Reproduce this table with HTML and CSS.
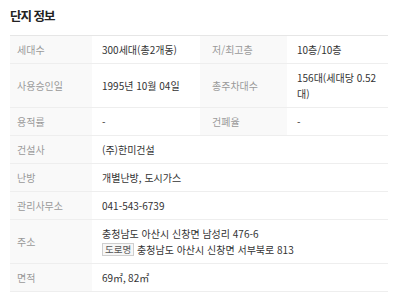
FILE: index.html
```html
<!DOCTYPE html>
<html lang="ko">
<head>
<meta charset="utf-8">
<link rel="stylesheet" href="styles.css">
</head>
<body>
<section class="complex">
  <h2 class="complex-title">단지 정보</h2>
  <table class="info">
    <colgroup>
      <col class="c-label1">
      <col class="c-value1">
      <col class="c-label2">
      <col class="c-value2">
    </colgroup>
    <tr>
      <th class="lbl">세대수</th>
      <td class="val">300세대(총2개동)</td>
      <th class="lbl lbl2">저/최고층</th>
      <td class="val">10층/10층</td>
    </tr>
    <tr>
      <th class="lbl">사용승인일</th>
      <td class="val">1995년 10월 04일</td>
      <th class="lbl lbl2">총주차대수</th>
      <td class="val">156대(세대당 0.52대)</td>
    </tr>
    <tr>
      <th class="lbl">용적률</th>
      <td class="val">-</td>
      <th class="lbl lbl2">건폐율</th>
      <td class="val">-</td>
    </tr>
    <tr>
      <th class="lbl">건설사</th>
      <td class="val" colspan="3">(주)한미건설</td>
    </tr>
    <tr>
      <th class="lbl">난방</th>
      <td class="val" colspan="3">개별난방, 도시가스</td>
    </tr>
    <tr>
      <th class="lbl">관리사무소</th>
      <td class="val" colspan="3">041-543-6739</td>
    </tr>
    <tr>
      <th class="lbl">주소</th>
      <td class="val" colspan="3">
        <div>충청남도 아산시 신창면 남성리 476-6</div>
        <div><span class="badge">도로명</span> 충청남도 아산시 신창면 서부북로 813</div>
      </td>
    </tr>
    <tr>
      <th class="lbl">면적</th>
      <td class="val" colspan="3">69㎡, 82㎡</td>
    </tr>
  </table>
</section>
</body>
</html>
```

FILE: styles.css
```css
* { box-sizing: border-box; }
body {
  margin: 0;
  background: #fff;
  font-family: "Noto Sans CJK KR", "Noto Sans", sans-serif;
  color: #333;
}
.complex {
  padding: 8px 12px 0 10px;
}
.complex-title {
  margin: 0 0 11px 0;
  font-size: 12.5px;
  line-height: 16px;
  font-weight: bold;
  color: #222;
  letter-spacing: -1px;
}
.info {
  width: 100%;
  border-collapse: collapse;
  table-layout: fixed;
  border-top: 1px solid #e6e6e6;
  font-size: 10px;
  line-height: 16px;
}
.c-label1 { width: 82px; }
.c-value1 { width: 108px; }
.c-label2 { width: 87px; }
.info th, .info td {
  border-bottom: 1px solid #eeeeee;
  padding: 6px 0 5px 0;
  vertical-align: middle;
  text-align: left;
}
.lbl {
  background: #f9f9f9;
  color: #999;
  font-weight: normal;
  padding-left: 7px !important;
}
.lbl2 {
  padding-left: 12px !important;
}
.val {
  color: #333;
  padding-left: 10px !important;
  padding-right: 8px !important;
}
.badge {
  display: inline-block;
  border: 1px solid #cfcfcf;
  background: #f7f7f7;
  color: #555;
  font-size: 9.5px;
  line-height: 11px;
  padding: 0 2px;
  vertical-align: 1px;
}
```
